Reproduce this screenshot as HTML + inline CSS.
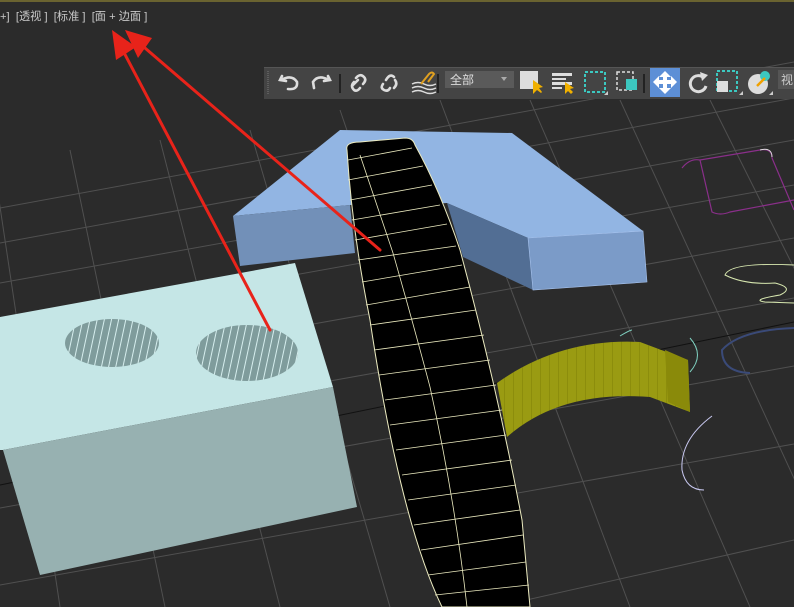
<!DOCTYPE html>
<html><head><meta charset="utf-8"><style>
html,body{margin:0;padding:0;background:#2b2b2b;width:794px;height:607px;overflow:hidden;}
#v{position:relative;width:794px;height:607px;overflow:hidden;background:#2b2b2b;font-family:"Liberation Sans","Noto Sans CJK SC",sans-serif;}
.lbl{position:absolute;left:0;top:9px;font-size:11.2px;line-height:16px;color:#c8c8c8;white-space:pre;}
</style></head><body><div id="v">
<svg width="794" height="607" style="position:absolute;left:0;top:0">
<rect x="0" y="0" width="794" height="2" fill="#6a6330"/>
<g stroke="#505050" stroke-width="1" fill="none">
<line x1="0" y1="208" x2="794" y2="62"/>
<line x1="0" y1="243" x2="794" y2="98"/>
<line x1="0" y1="283" x2="794" y2="140"/>
<line x1="0" y1="328" x2="794" y2="185"/>
<line x1="0" y1="380" x2="794" y2="238"/>
<line x1="0" y1="440" x2="794" y2="298"/>
<line x1="0" y1="508" x2="794" y2="366"/>
<line x1="0" y1="585" x2="794" y2="444"/>
<line x1="80" y1="700" x2="794" y2="540"/>
<line x1="-10" y1="140" x2="60" y2="607"/>
<line x1="70" y1="150" x2="165" y2="607"/>
<line x1="160" y1="140" x2="280" y2="607"/>
<line x1="250" y1="130" x2="390" y2="607"/>
<line x1="340" y1="110" x2="510" y2="607"/>
<line x1="440" y1="100" x2="630" y2="607"/>
<line x1="530" y1="100" x2="750" y2="607"/>
<line x1="620" y1="100" x2="850" y2="600"/>
<line x1="710" y1="100" x2="900" y2="480"/>
</g>
<line x1="0" y1="485" x2="794" y2="322" stroke="#111" stroke-width="1"/>
<polygon points="233,216 340,130 512,133 643,231 528,238 447,203 350,205" fill="#92b5e3"/>
<polygon points="233,216 350,205 355,253 240,266" fill="#7290b8"/>
<polygon points="447,203 528,238 533,290 463,257" fill="#526e94"/>
<polygon points="528,238 643,231 647,282 533,290" fill="#7b9bc8" stroke="#a8c4ef" stroke-width="0.6"/>
<polygon points="0,317 295,263 333,387 3,450 0,450" fill="#c5e6e6"/>
<polygon points="3,450 333,387 357,507 40,575" fill="#97b1b1"/>
<defs><pattern id="st" width="7" height="40" patternUnits="userSpaceOnUse" patternTransform="rotate(12)"><rect width="7" height="40" fill="#7f9c9c"/><rect x="0" y="0" width="1" height="40" fill="#d6eeee"/></pattern>
<pattern id="ys" width="9" height="60" patternUnits="userSpaceOnUse"><rect width="9" height="60" fill="#9a9b12"/><rect width="1" height="60" fill="#8c8d0c"/></pattern></defs>
<ellipse cx="112" cy="343" rx="47" ry="24" fill="url(#st)"/>
<ellipse cx="247" cy="353" rx="51" ry="28" fill="url(#st)"/>
<path d="M497,383 Q560,338 640,342 L688,360 L690,412 L650,397 Q560,390 507,437 Z" fill="url(#ys)"/>
<path d="M665,350 L688,360 L690,412 L668,402 Z" fill="#8a8a0a"/>
<path d="M620,336 Q630,330 632,330" stroke="#7fd0c0" fill="none"/>
<path d="M690,338 Q705,355 690,372" stroke="#7fd0c0" fill="none"/>
<path d="M347,150 Q345,142 360,142 L405,138 Q413,138 415,145 Q440,190 460,250 Q497,387 522,520 L530,607 L442,607 Q400,520 370,320 Q352,230 347,150 Z" fill="#000" stroke="#ecebc0" stroke-width="1"/>
<path d="M360,155 Q375,200 393,253 Q415,330 430,387 Q455,500 467,607" fill="none" stroke="#ecebc0" stroke-width="0.8"/>
<g stroke="#ecebc0" stroke-width="0.8">
<line x1="348" y1="160" x2="412" y2="148"/><line x1="348" y1="180" x2="423" y2="166"/><line x1="350" y1="200" x2="432" y2="185"/><line x1="352" y1="220" x2="440" y2="205"/><line x1="355" y1="240" x2="447" y2="224"/><line x1="358" y1="260" x2="456" y2="246"/><line x1="362" y1="282" x2="462" y2="265"/><line x1="366" y1="305" x2="470" y2="287"/><line x1="370" y1="325" x2="476" y2="310"/><line x1="374" y1="350" x2="484" y2="335"/><line x1="379" y1="375" x2="490" y2="360"/><line x1="385" y1="400" x2="496" y2="385"/><line x1="390" y1="425" x2="502" y2="410"/><line x1="396" y1="450" x2="506" y2="435"/><line x1="402" y1="475" x2="512" y2="460"/><line x1="408" y1="500" x2="516" y2="485"/><line x1="414" y1="525" x2="520" y2="510"/><line x1="421" y1="550" x2="523" y2="535"/><line x1="428" y1="575" x2="526" y2="562"/><line x1="435" y1="595" x2="529" y2="585"/>
</g>
<path d="M682,168 Q690,158 700,160 L760,150 Q772,148 772,158 L794,210 M700,160 L712,212 Q720,216 730,212 L794,200" stroke="#8a2f8a" fill="none" stroke-width="1.2"/>
<path d="M760,150 Q772,147 772,157" stroke="#ddd" fill="none"/>
<path d="M794,265 Q730,262 725,275 Q745,285 775,283 Q795,288 780,295 Q750,300 765,302 L794,303" stroke="#d8e8b0" fill="none" stroke-width="1"/>
<path d="M794,328 Q740,330 722,350 Q722,372 750,373" stroke="#3a4a78" fill="none" stroke-width="2"/>
<path d="M712,416 Q680,440 682,470 Q686,490 704,490" stroke="#c8c8f0" fill="none"/>
<g stroke="#e8231a" fill="#e8231a" stroke-linecap="round">
<line x1="270" y1="330" x2="120" y2="45" stroke-width="3"/>
<line x1="380" y1="250" x2="138" y2="42" stroke-width="3"/>
<polygon points="112,30 136,47 116,60" stroke="none"/>
<polygon points="125,30 152,38 138,58" stroke="none"/>
</g>
<rect x="264" y="67" width="530" height="32" fill="#444"/>
<rect x="264" y="67" width="530" height="1" fill="#555"/>
<line x1="268" y1="71" x2="268" y2="95" stroke="#777" stroke-dasharray="1,1"/>
<g stroke="#ddd" stroke-width="2.6" fill="none" stroke-linecap="round">
<path d="M282,76 L280,80 L286,81 M281,80 Q292,74 297,82 Q298,90 288,89"/>
<path d="M328,76 L330,80 L324,81 M329,80 Q318,74 313,82 L314,88"/>
<path d="M352,86 L358,80 M356,78 Q360,73 364,77 Q367,80 363,84 M354,82 Q350,86 354,90 Q357,92 360,88"/>
<path d="M386,80 Q390,73 394,77 M395,80 Q398,84 394,88 M383,84 Q380,88 384,90 Q388,92 390,88"/>
</g>
<line x1="340" y1="74" x2="340" y2="93" stroke="#222" stroke-width="2"/>
<line x1="438" y1="74" x2="438" y2="93" stroke="#222" stroke-width="2"/>
<g stroke="#ddd" stroke-width="1.5" fill="none"><path d="M412,84 Q418,81 424,84 T436,84 M412,88 Q418,85 424,88 T436,88 M412,92 Q418,89 424,92 T436,92"/></g>
<path d="M421,84 L429,74 Q432,71 434,74 L428,82" stroke="#e0a020" stroke-width="2" fill="none"/>
<rect x="445" y="71" width="69" height="17" fill="#5a5a5a"/>
<polygon points="501,77 507,77 504,81" fill="#aaa"/>
<rect x="520" y="71" width="18" height="18" fill="#ddd"/>
<polygon points="533,80 533,94 537,90 541,93 542,92 539,88 543,87" fill="#f0b000"/>
<g fill="#ddd"><rect x="552" y="73" width="20" height="3"/><rect x="552" y="78" width="14" height="2"/><rect x="552" y="82" width="20" height="3"/><rect x="552" y="87" width="10" height="2"/></g>
<polygon points="565,82 565,94 568,91 571,94 573,92 570,89 574,88" fill="#f0b000"/>
<rect x="585" y="72" width="20" height="20" fill="none" stroke="#3cc8c0" stroke-width="2" stroke-dasharray="3,2"/>
<polygon points="604,95 608,95 608,91" fill="#ccc"/>
<rect x="617" y="72" width="16" height="18" fill="none" stroke="#ddd" stroke-width="1.5" stroke-dasharray="3,2"/>
<rect x="626" y="79" width="11" height="11" fill="#3cc8c0"/>
<line x1="644" y1="74" x2="644" y2="93" stroke="#222" stroke-width="2"/>
<rect x="650" y="68" width="30" height="29" fill="#5d8fd6"/>
<g fill="#fff"><polygon points="665,71 659,77 671,77"/><polygon points="665,94 659,88 671,88"/><polygon points="653,82 659,76 659,88"/><polygon points="677,82 671,76 671,88"/><rect x="663" y="75" width="4" height="14"/><rect x="657" y="80" width="16" height="4"/></g>
<path d="M704,78 A8,8 0 1 0 706,86" stroke="#ddd" stroke-width="3" fill="none"/>
<polygon points="700,72 708,75 702,81" fill="#ddd"/>
<rect x="717" y="71" width="20" height="20" fill="none" stroke="#3cc8c0" stroke-width="2" stroke-dasharray="3,2"/>
<rect x="717" y="81" width="11" height="11" fill="#ddd"/>
<polygon points="739,95 743,95 743,91" fill="#ccc"/>
<circle cx="758" cy="84" r="10" fill="#ddd"/>
<circle cx="765" cy="76" r="5" fill="#3cc8c0"/>
<path d="M757,86 L765,78" stroke="#f0a000" stroke-width="2.5"/>
<polygon points="769,95 773,95 773,91" fill="#ccc"/>
<rect x="778" y="70" width="20" height="19" fill="#555"/>
<text x="781" y="84" font-size="12" fill="#ccc" font-family="Liberation Sans,Noto Sans CJK SC,sans-serif">视</text>
<text x="450" y="84" font-size="12" fill="#ddd" font-family="Liberation Sans,Noto Sans CJK SC,sans-serif">全部</text>
</svg>
<div class="lbl">+]  [透视 ]  [标准 ]  [面 + 边面 ]</div>
</div></body></html>
